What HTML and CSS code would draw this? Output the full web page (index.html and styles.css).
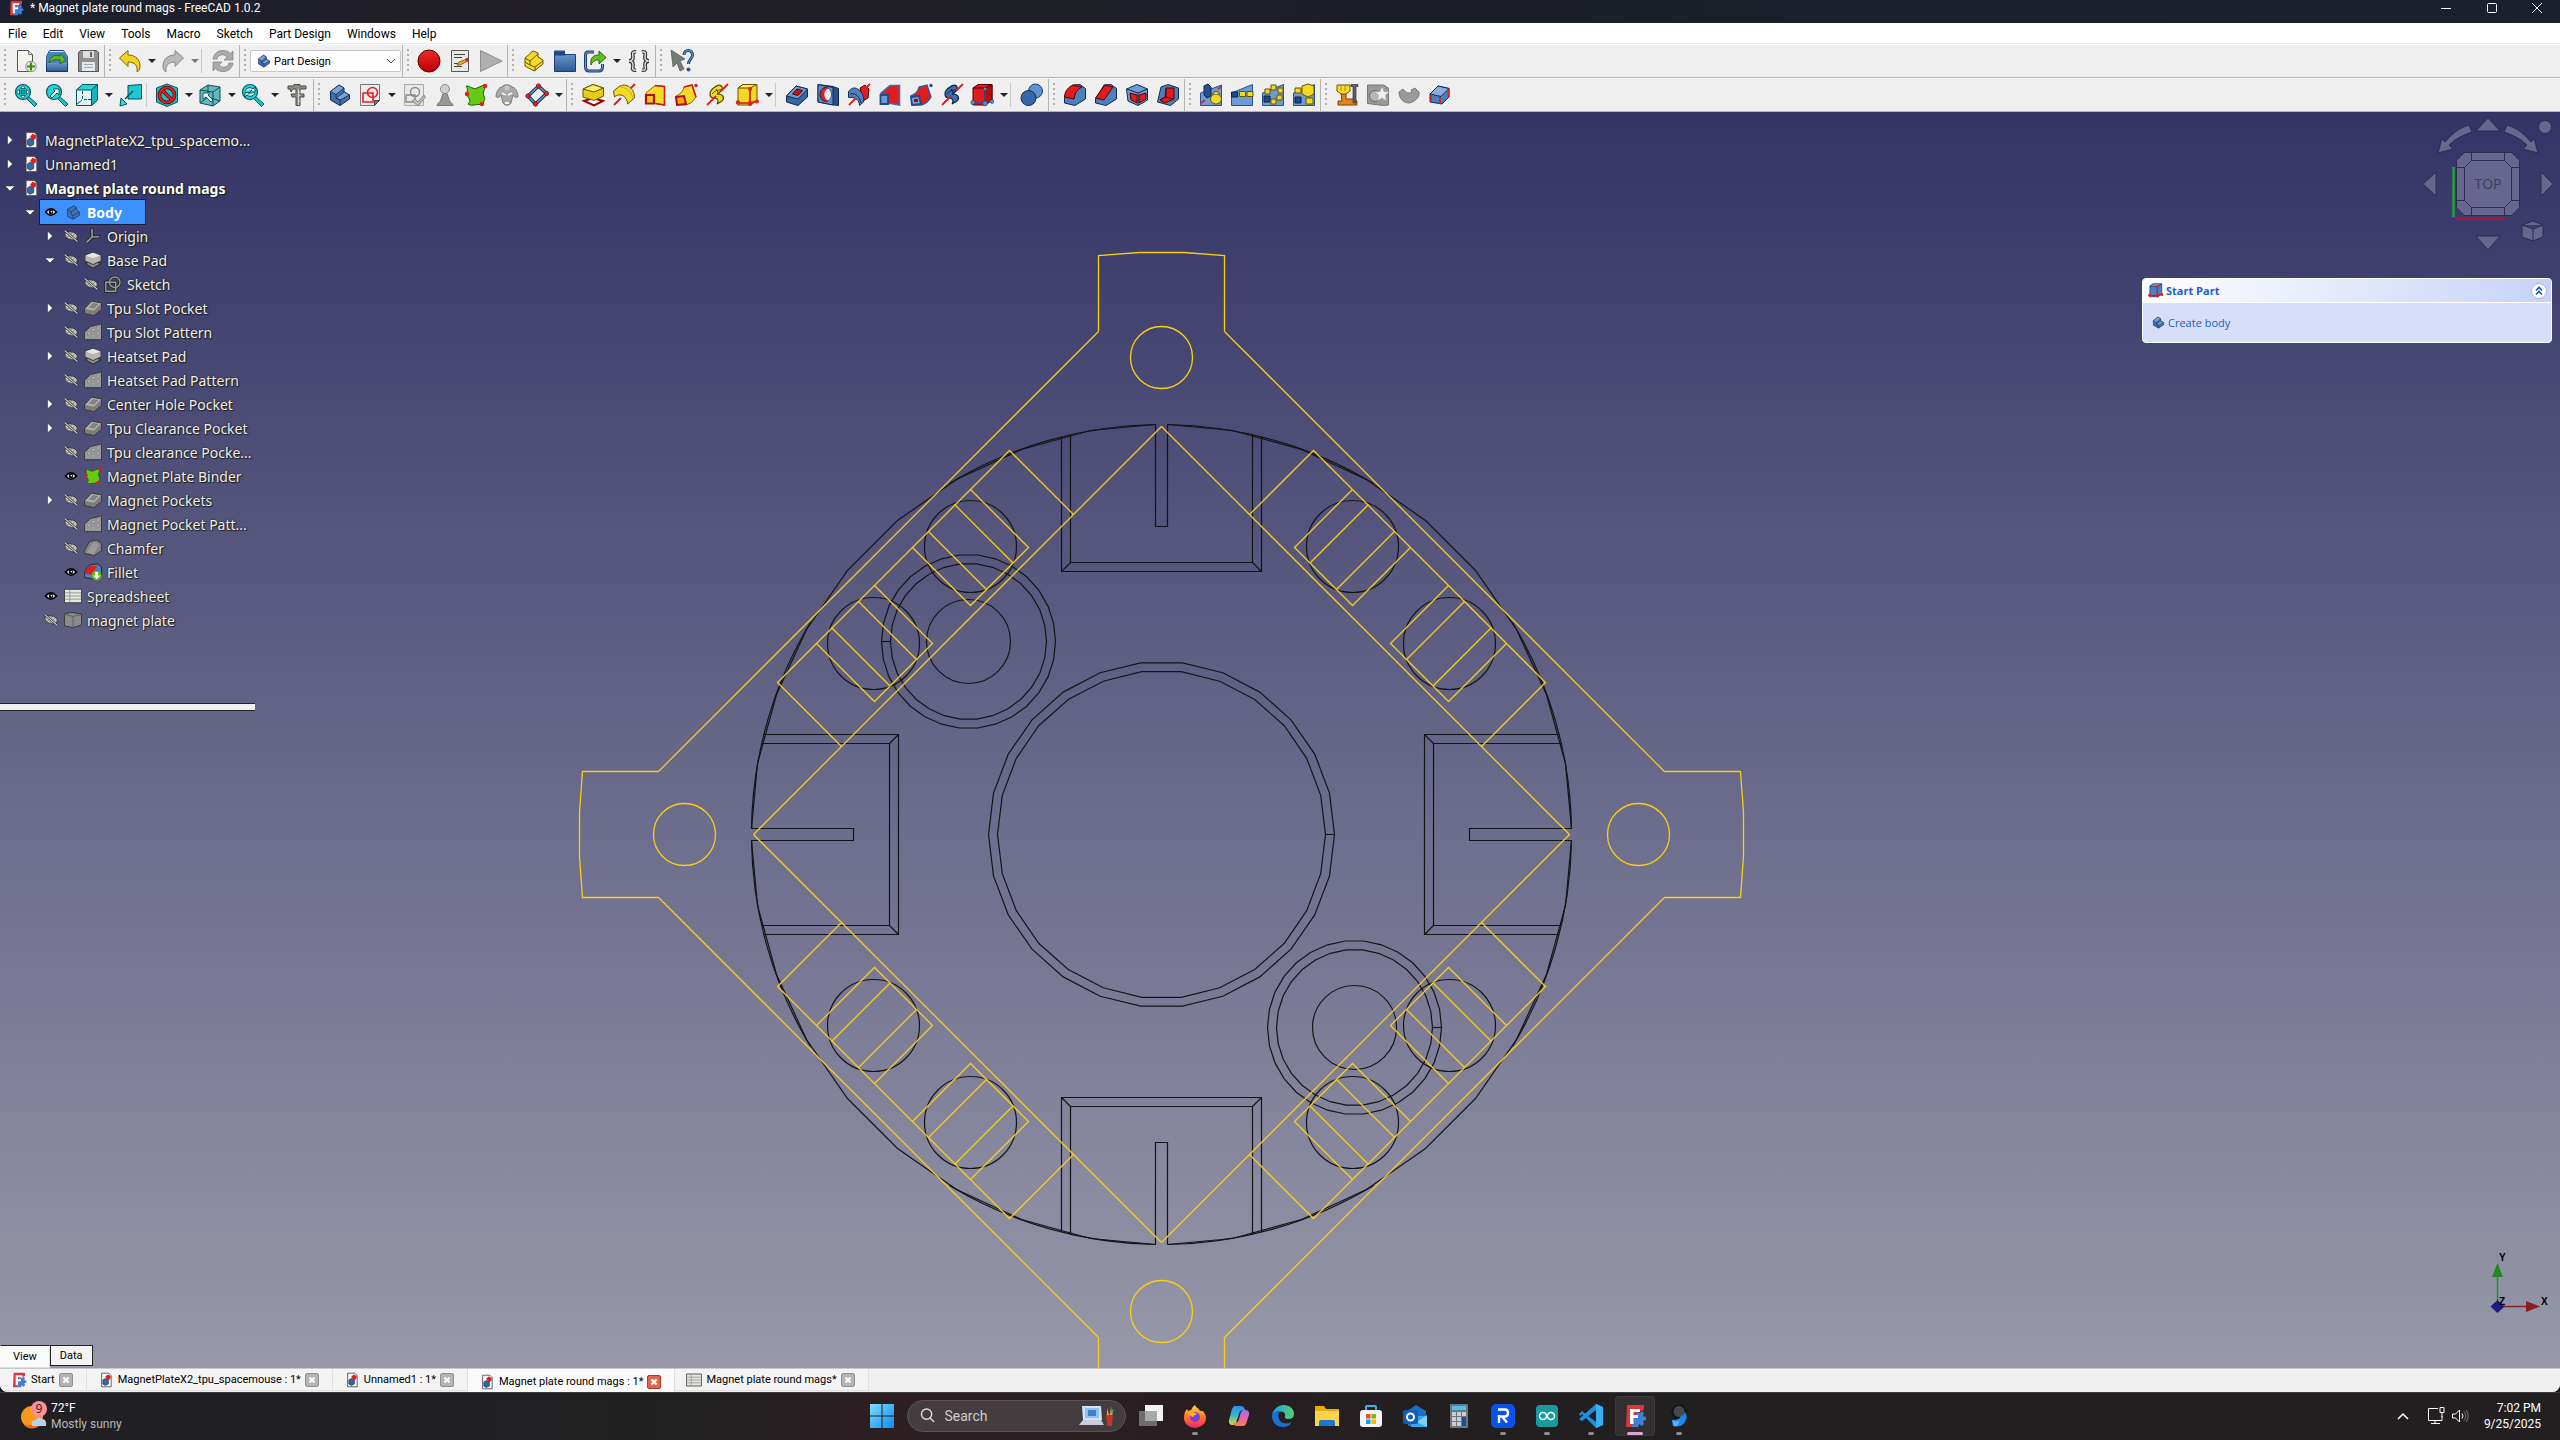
FILE: index.html
```html
<!DOCTYPE html>
<html lang="en">
<head>
<meta charset="utf-8">
<title>Magnet plate round mags - FreeCAD 1.0.2</title>
<link rel="stylesheet" href="styles.css">
</head>
<body>
<svg class="defs" aria-hidden="true">
  <defs>
    <linearGradient id="gb" x1="0" y1="0" x2="0" y2="1"><stop offset="0" stop-color="#729fcf"/><stop offset="1" stop-color="#2c5a99"/></linearGradient>
    <linearGradient id="gr" x1="0" y1="0" x2="0" y2="1"><stop offset="0" stop-color="#ef2929"/><stop offset="1" stop-color="#b80000"/></linearGradient>
    <linearGradient id="ff" x1="0" y1="0" x2="0" y2="1"><stop offset="0" stop-color="#ffd83a"/><stop offset=".5" stop-color="#ff7a1e"/><stop offset="1" stop-color="#f0256a"/></linearGradient>
    <linearGradient id="cp" x1="0" y1="0" x2="0" y2="1"><stop offset="0" stop-color="#2a8cf0"/><stop offset=".5" stop-color="#35b8c8"/><stop offset="1" stop-color="#f2d43a"/></linearGradient>
    <linearGradient id="cq" x1="0" y1="0" x2="0" y2="1"><stop offset="0" stop-color="#a06cf0"/><stop offset=".5" stop-color="#e860b0"/><stop offset="1" stop-color="#f7873a"/></linearGradient>
    <linearGradient id="eg" x1="0" y1="0" x2="1" y2="0"><stop offset="0" stop-color="#1a9fe6"/><stop offset="1" stop-color="#53d16e"/></linearGradient>
    <linearGradient id="wn" x1="0" y1="0" x2="1" y2="1"><stop offset="0" stop-color="#7fdcff"/><stop offset="1" stop-color="#0a8df2"/></linearGradient>
  </defs>
  <symbol id="fc" viewBox="0 0 24 24"><path d="M4 1h17v5l-8 3-3 14H3z" fill="#e0343c"/><path d="M14 8l3 1 2-2 2 2-1 3 3 1v3l-3 1 1 3-2 2-3-2-1 3H9l1-6z" fill="#3d7fd6"/><path d="M7 5h10v3h-6.500v3H15v3h-4.500v6H7z" fill="#fff"/></symbol>
  <symbol id="new" viewBox="0 0 24 24"><path d="M3.500 1.500h11l4 4v17h-15z" fill="#f2f2f0" stroke="#555"/><path d="M14.500 1.500v4h4" fill="#ccc" stroke="#777"/><circle cx="17" cy="17.500" r="5.200" fill="#e8f0e0" stroke="#888"/><path d="M17 13.500v8M13 17.500h8" stroke="#3a8a10" stroke-width="2.200"/></symbol>
  <symbol id="open" viewBox="0 0 24 24"><path d="M1.500 22.500v-15l3-6h14l4 6v15z" fill="#eee" stroke="#163a70"/><path d="M1.500 13h21v9.500h-21z" fill="url(#gb)" stroke="#163a70"/><path d="M1.500 7v7h21V7l-3-4h-15z" fill="#4a7fc0"/><path d="M4 14c1-7 6-9 11-7l1-2 5 6-6 4V11c-5-1-8 0-11 3z" fill="#5cb81c" stroke="#265c05" stroke-width=".8"/></symbol>
  <symbol id="save" viewBox="0 0 24 24"><path d="M2.500 3.500l2-2h16l2 2v19h-20z" fill="#8f8f8f" stroke="#555"/><path d="M7 2h11v7H7z" fill="#ddd"/><path d="M14 3h2v5h-2z" fill="#666"/><path d="M6 13h13v9H6z" fill="#e6e8ec"/><path d="M8 15.500h9M8 18.500h9" stroke="#9ab"/></symbol>
  <symbol id="undo" viewBox="0 0 24 24"><path d="M1.500 9L10 1.500V6c8 0 12 5 12 11 0 3-1 5-3 6 1-6-2-10-9-10v4.500z" fill="#f3d321" stroke="#77640a"/></symbol>
  <symbol id="redo" viewBox="0 0 24 24"><path d="M22.500 9L14 1.500V6C6 6 2 11 2 17c0 3 1 5 3 6-1-6 2-10 9-10v4.500z" fill="#b9b9b9" stroke="#8a8a8a"/></symbol>
  <symbol id="refresh" viewBox="0 0 24 24"><path d="M2 10C3 4 7 1.500 12 1.500c3 0 6 1 7.500 3L22 2v9h-9l3-3c-4-4-9-2-10 2zM22 14c-1 6-5 8.500-10 8.500-3 0-6-1-7.500-3L2 22v-9h9l-3 3c4 4 9 2 10-2z" fill="#aaa" stroke="#888" stroke-width=".8"/></symbol>
  <symbol id="rec" viewBox="0 0 24 24"><circle cx="12" cy="12" r="11" fill="url(#gr)" stroke="#5c0000" stroke-width="1"/></symbol>
  <symbol id="macro" viewBox="0 0 24 24"><path d="M3.500 1.500h17v21h-17z" fill="#e9e9e4" stroke="#555"/><path d="M6 5.500h11M6 8.500h8M6 14.500h4M6 17.500h8" stroke="#444"/><path d="M9 16l2-3 8-3 1 2-8 4z" fill="#e6b422" stroke="#5c3a00" stroke-width=".7"/><path d="M17 10l3-1.500 1 3-3 1z" fill="#c22"/></symbol>
  <symbol id="play" viewBox="0 0 24 24"><path d="M1.500 1.500v21L23 12z" fill="#b0b0b0" stroke="#8f8f8f"/></symbol>
  <symbol id="part" viewBox="0 0 24 24"><path d="M3 9l8-7 5 2v4l5 3v4l-9 7-9-5z" fill="#f5dc2a" stroke="#6b5900"/><path d="M3 9l5 3 8-7M8 12v4l5 2 8-6M13 18v4M3 13l5 3" fill="none" stroke="#6b5900"/></symbol>
  <symbol id="folder" viewBox="0 0 24 24"><path d="M1.500 2h10v3.500h11v17h-21z" fill="url(#gb)" stroke="#1b3f74"/><path d="M2 2.500h9l1 4H2z" fill="#1c4687"/></symbol>
  <symbol id="export" viewBox="0 0 24 24"><path d="M11 3H5Q2.500 3 2.500 6v12q0 4 4 4h9q4 0 4-4v-3" fill="none" stroke="#1d3f75" stroke-width="3"/><path d="M11 3H5Q2.500 3 2.500 6v12q0 4 4 4h9q4 0 4-4v-3" fill="none" stroke="#6d9ad0"/><path d="M8 16c-1-7 2-10 8-10V2l7 6.500-7 6.500v-4c-4 0-6 1-8 5z" fill="#5fc31b" stroke="#28600a"/></symbol>
  <symbol id="braces" viewBox="0 0 24 24"><path d="M9 3C4 2 6 6 6 8s-1 4-4 4c3 0 4 2 4 4s-2 6 3 5M15 3c5-1 3 3 3 5s1 4 4 4c-3 0-4 2-4 4s2 6-3 5" fill="none" stroke="#3c3c3c" stroke-width="3.800"/><path d="M9 3C4 2 6 6 6 8s-1 4-4 4c3 0 4 2 4 4s-2 6 3 5M15 3c5-1 3 3 3 5s1 4 4 4c-3 0-4 2-4 4s2 6-3 5" fill="none" stroke="#f4f4f4" stroke-width="1.200"/></symbol>
  <symbol id="whats" viewBox="0 0 24 24"><path d="M1 1l14 9-5 2 4 8-4 2-3-8-4 4z" fill="#757a76" stroke="#50544f" stroke-width=".7"/><path d="M14 6c0-6 8.500-6 8.500 0 0 4-4 4-4 9" fill="none" stroke="#183a68" stroke-width="3"/><path d="M14 6c0-6 8.500-6 8.500 0 0 4-4 4-4 9" fill="none" stroke="#5d8cc4" stroke-width="1.300"/><circle cx="18.500" cy="20.500" r="2" fill="#2d578f"/></symbol>
  <symbol id="mag" viewBox="0 0 24 24"><path d="M14 13l9 8-2.500 2.500L12 15z" fill="#13c5cf" stroke="#064b50" stroke-width=".9"/><circle cx="9" cy="9" r="7.500" fill="#1fd3dc" stroke="#075a60" stroke-width="1.200"/></symbol>
  <symbol id="fit" viewBox="0 0 24 24"><use href="#mag"/><path d="M9 2.500l2.500 3h-5zM9 15.500l2.500-3h-5zM2.500 9l3-2.500v5zM15.500 9l-3-2.500v5z" fill="#e8ffff" stroke="#034" stroke-width=".7"/><path d="M7 7h4v4H7z" fill="#0aa" stroke="#034" stroke-width=".5"/></symbol>
  <symbol id="fitsel" viewBox="0 0 24 24"><use href="#mag"/><path d="M5 13l5-5-2-2h6v6l-2-2-5 5z" fill="#e8f6f6" stroke="#034" stroke-width=".8"/></symbol>
  <symbol id="sync" viewBox="0 0 24 24"><use href="#mag"/><path d="M4 8c2-4 6-4 8-2l2-2v5H9l2-2M14 10c-2 4-6 4-8 2l-2 2V9.500h5l-2 2" fill="#c8f4f4" stroke="#044" stroke-width=".9"/></symbol>
  <symbol id="cube" viewBox="0 0 24 24"><path d="M1.500 7l6-5.500h15V17l-6 5.500h-15z" fill="#dff5f5" stroke="#0b5358"/><path d="M1.500 7l6-5.500h15L16.500 7z" fill="#1ed6e0" stroke="#0b5358"/><path d="M16.500 7l6-5.500V17l-6 5.500z" fill="#13b6c2" stroke="#0b5358"/><path d="M7.500 8v3M7.500 13v3M2 21l5-4M9 16.500h3M13 16.500h3" stroke="#0b5358"/></symbol>
  <symbol id="texview" viewBox="0 0 24 24"><path d="M9 2.500l13.500-1V16L9 16z" fill="#1cc8d2" stroke="#0b5358"/><path d="M14 8L6 16" stroke="#0b5358" stroke-width="1.500"/><path d="M1 23l1-8 6 6z" fill="#2cd8e0" stroke="#0b5358"/></symbol>
  <symbol id="noent" viewBox="0 0 24 24"><path d="M12 1l10.500 4v14L12 23.500 1.500 19V5z" fill="#18c0ca" stroke="#0b5358"/><circle cx="12" cy="12" r="7.500" fill="none" stroke="#500" stroke-width="3.600"/><path d="M7 7l10 10" stroke="#500" stroke-width="3.600"/><circle cx="12" cy="12" r="7.500" fill="none" stroke="#e02020" stroke-width="2.200"/><path d="M7 7l10 10" stroke="#e02020" stroke-width="2.200"/></symbol>
  <symbol id="cube2" viewBox="0 0 24 24"><path d="M2 7l8-5 12 2v14l-7 5-13-3z" fill="#63b8bf" stroke="#0b5358"/><path d="M2 7l13 2 7-5M15 9v14M10 2v12l12 4M10 14l-8 6" fill="none" stroke="#0b5358"/><path d="M5 10h7l-2 2 5 5-2 2-5-5-3 2z" fill="#e2f3f3" stroke="#134" stroke-width=".8"/></symbol>
  <symbol id="caliper" viewBox="0 0 24 24"><path d="M3 3h6V1.500h6V3h6v3h-6v5h4v3h-4v8.500h-4V14H7l-1-3h5V6H8L6 9 5 6H3z" fill="#8d8d85" stroke="#4a4a45"/><path d="M13.500 6v16M13.500 9h2M13.500 12h2M13.500 18h2" stroke="#eee" stroke-width=".8"/></symbol>
  <symbol id="body" viewBox="0 0 24 24"><path d="M2.500 8.500L11 2l5 3v4l5.500 3v4L12 22.500 2.500 17z" fill="#3f6fae" stroke="#122a4e"/><path d="M2.500 8.500L11 2l5 3-8 6.500zM12 17l9.500-5-5-3L8 15z" fill="#7aa5d8" stroke="#122a4e" stroke-width=".8"/><path d="M8 11.500V15l4 2v5.500" fill="none" stroke="#122a4e" stroke-width=".8"/></symbol>
  <symbol id="sketch" viewBox="0 0 24 24"><path d="M2.500 1.500h19v16l-5 5h-14z" fill="#eceeec" stroke="#777"/><path d="M21.500 17.500h-5v5z" fill="#777" stroke="#444"/><path d="M5 10h10v9H5z" fill="none" stroke="#e02020" stroke-width="1.600"/><circle cx="14.500" cy="9.500" r="5" fill="none" stroke="#e02020" stroke-width="1.600"/></symbol>
  <symbol id="sketchok" viewBox="0 0 24 24"><path d="M2.500 1.500h19v21h-19z" fill="#e8e8e8" stroke="#aaa"/><path d="M4 12h9v7H4z" fill="none" stroke="#8a8a8a" stroke-width="1.400"/><circle cx="13" cy="9" r="4.500" fill="none" stroke="#8a8a8a" stroke-width="1.400"/><path d="M10 18l3-2 3 3 6-7 1.500 2L16 23z" fill="#bbb" stroke="#8a8a8a"/></symbol>
  <symbol id="pawn" viewBox="0 0 24 24"><path d="M4 22.500c0-2 3-3 4-6l2-6h4l2 6c1 3 4 4 4 6z" fill="#989898" stroke="#777"/><circle cx="12" cy="6" r="4.500" fill="#d0d0d0" stroke="#888"/></symbol>
  <symbol id="binder" viewBox="0 0 24 24"><path d="M2 3c5 0 7 4 11 2 3-1 5-3 9-3-1 5-4 7-2 11 1 2 1 3 0 5l-2 4C13 20 8 24 4 21c4-4 0-6-1-9s2-5-1-9z" fill="#63cc12" stroke="#235c00"/><circle cx="21" cy="3" r="2.200" fill="#e02020"/><circle cx="3" cy="11" r="2.200" fill="#e02020"/><circle cx="18" cy="21" r="2.200" fill="#e02020"/></symbol>
  <symbol id="sheep" viewBox="0 0 24 24"><path d="M7 4c2-3 8-3 10 0 3 0 6 5 6 10-2 1-4 0-5-2l-2 8c-2 3-6 3-8 0l-2-8c-1 2-3 3-5 2C1 9 4 4 7 4z" fill="#a9a9a9" stroke="#7c7c7c"/><path d="M7 10l4 2M17 10l-4 2M10 20h4" stroke="#f4f4f4" stroke-width="1.800"/><circle cx="12" cy="5" r="2.500" fill="#c8c8c8"/></symbol>
  <symbol id="diamond" viewBox="0 0 24 24"><path d="M13.500 3L21.500 10.500 10.500 21 3 13z" fill="none" stroke="#142e55" stroke-width="3.400"/><path d="M13.500 3L21.500 10.500 10.500 21 3 13z" fill="none" stroke="#6d9ad0" stroke-width="1.400"/><g fill="#e02020" stroke="#700" stroke-width=".6"><circle cx="13.500" cy="3" r="2.200"/><circle cx="21.500" cy="10.500" r="2.200"/><circle cx="10.500" cy="21" r="2.200"/><circle cx="3" cy="13" r="2.200"/></g></symbol>
  <symbol id="pad" viewBox="0 0 24 24"><path d="M3 18l9-3 10 3-9 4.500z" fill="#fff" stroke="#a00000" stroke-width="2"/><path d="M2 6l10-4.500L22.500 5v8L13 17.500 2 14z" fill="#e8cc18" stroke="#665500"/><path d="M2 6l10-4.500L22.500 5 13 9z" fill="#fbee5a" stroke="#665500"/></symbol>
  <symbol id="revol" viewBox="0 0 24 24"><path d="M1.500 8l5-4c4-3 8-2 11 0 4 3 5 7 5 11l-7 6c0-3-1-6-4-8s-7-1-9 1z" fill="#f2dc28" stroke="#665500"/><path d="M8 4c7 0 13 7 13 12" fill="none" stroke="#c8b010"/><path d="M2 22l7-7M19 5l4-4" stroke="#e02020" stroke-width="2"/></symbol>
  <symbol id="loft" viewBox="0 0 24 24"><path d="M3 10L12 2.500l9.500 1V22l-9-1.500H3z" fill="#f2dc28" stroke="#8a6a00"/><path d="M12 2.500l9.500 1V22l-9-1.500" fill="none" stroke="#d01818" stroke-width="1.600"/><path d="M3 12h8v8.500H3z" fill="#f5c820" stroke="#b01010" stroke-width="2.200"/></symbol>
  <symbol id="pipe" viewBox="0 0 24 24"><path d="M2 13Q9 10 10 4l8-2 4 12q-4 7-10 8H4z" fill="#f2dc28" stroke="#8a6a00"/><path d="M10 4l8-2 4 12" fill="none" stroke="#d01818" stroke-width="1.600"/><path d="M2 14l8-1 2 8-9 1z" fill="#f5a820" stroke="#b01010" stroke-width="2"/><circle cx="22" cy="2.500" r="1.700" fill="#d01818"/></symbol>
  <symbol id="helix" viewBox="0 0 24 24"><path d="M10 4c5-4 8-1 7 3l-4 4c5 0 7 4 4 7l-5 3c2-3 1-6-3-6-5 0-6-7 1-11z" fill="#f0d824" stroke="#554800" stroke-width="1.200"/><path d="M7 11c3-4 7-4 10-4M11 6c2 2 2 4 2 6" fill="none" stroke="#554800"/><path d="M2 22l9-9M16 8l7-7" stroke="#e02020" stroke-width="1.800"/></symbol>
  <symbol id="addcube" viewBox="0 0 24 24"><path d="M3 5l5-3.500h14V17l-6 5H3z" fill="#f0d824" stroke="#665500"/><path d="M3 5l5-3.500h14L15 5z" fill="#fbee5a" stroke="#665500"/><path d="M15 5v15M3 20h12l7-2M15 5v13" stroke="#d01818" stroke-width="1.600" fill="none"/><g fill="#e02020"><circle cx="15" cy="6" r="2"/><circle cx="3" cy="19.500" r="2.200"/><circle cx="15" cy="20.500" r="2.400"/><circle cx="22" cy="18.500" r="2"/></g></symbol>
  <symbol id="startpart" viewBox="0 0 24 24"><path d="M3 5l5-3.500h14V17l-6 5H3z" fill="#4a7fc0" stroke="#122a4e"/><path d="M3 5l5-3.500h14L15 5z" fill="#86aede" stroke="#122a4e"/><path d="M15 5v15M3 20h12l7-2" stroke="#d01818" stroke-width="2" fill="none"/><g fill="#e02020"><circle cx="15" cy="6" r="2.200"/><circle cx="3" cy="19.500" r="2.600"/><circle cx="15" cy="20.500" r="2.800"/><circle cx="22" cy="18.500" r="2.400"/></g></symbol>
  <symbol id="pocket" viewBox="0 0 24 24"><path d="M1.500 13L11 3l11.500 3v8L13 22.500 1.500 19z" fill="#3466a8" stroke="#122a4e"/><path d="M1.500 13L11 3l11.500 3L13 16z" fill="#6d9bd2" stroke="#122a4e"/><path d="M7.500 11l4.500-5 5.500 1.500-4.500 5z" fill="#d01010" stroke="#500"/></symbol>
  <symbol id="hole" viewBox="0 0 24 24"><path d="M2 1.500l15 2 5.500 2v17L18 22 2 19z" fill="#27508c" stroke="#122a4e"/><path d="M2 1.500l15 3V22L2 19z" fill="#5b8cc8" stroke="#122a4e"/><ellipse cx="9.500" cy="11.500" rx="5.500" ry="7" fill="#e01c1c" stroke="#122a4e"/><path d="M12 5.500c-5 2-5 10 0 12 4-2 4-10 0-12z" fill="#efefef"/></symbol>
  <symbol id="groove" viewBox="0 0 24 24"><path d="M13 5l5-3 4 4-1 9-5 3z" fill="#e02020" stroke="#500"/><path d="M1.500 9c2-4 6-5 9-3 5 3 7 8 6 13l-4 3.500c0-5-4-9-11-8z" fill="#4e82c2" stroke="#122a4e"/><path d="M3 11c6-2 10 4 11 9" fill="none" stroke="#122a4e"/><path d="M2 22l7-7M19 5l4-4" stroke="#e02020" stroke-width="1.800"/></symbol>
  <symbol id="subloft" viewBox="0 0 24 24"><path d="M3 10L12 2.500h9.500V22l-9-1.500H3z" fill="#e01c1c" stroke="#3b6fb4" stroke-width="1.600"/><path d="M2.500 12H10v9H2.500z" fill="#6d9bd2" stroke="#1f4a88" stroke-width="1.800"/></symbol>
  <symbol id="subpipe" viewBox="0 0 24 24"><path d="M2 13Q9 10 10 4l8-2 4 12q-4 7-10 8H4z" fill="#e01c1c" stroke="#2d5d9f" stroke-width="1.400"/><path d="M2 14l8-1 2 8-9 1z" fill="#7aa5d8" stroke="#1f4a88" stroke-width="1.800"/><path d="M5 16h4v3H5z" fill="#a00"/><circle cx="22" cy="2.500" r="1.700" fill="#27508c"/></symbol>
  <symbol id="subhelix" viewBox="0 0 24 24"><path d="M10 4c5-4 8-1 7 3l-4 4c5 0 7 4 4 7l-5 3c2-3 1-6-3-6-5 0-6-7 1-11z" fill="#3d6fb0" stroke="#0d2344" stroke-width="1.200"/><path d="M7 11c3-4 7-4 10-4M11 6c2 2 2 4 2 6" fill="none" stroke="#0d2344"/><path d="M2 22l9-9M16 8l7-7" stroke="#e02020" stroke-width="1.800"/></symbol>
  <symbol id="subcube" viewBox="0 0 24 24"><path d="M3 5l5-3.500h14V17l-6 5H3z" fill="#e01c1c" stroke="#500"/><path d="M15 5l7-3.500V17l-7 4z" fill="#b80c0c" stroke="#500"/><path d="M3 5h12" stroke="#500"/><path d="M15 5v15M3 20h12l7-2" stroke="#27508c" stroke-width="1.600" fill="none"/><g fill="#5b8cc8" stroke="#122a4e" stroke-width=".5"><circle cx="15" cy="6" r="1.800"/><circle cx="3" cy="19.500" r="2.200"/><circle cx="15" cy="20.500" r="2.400"/><circle cx="22" cy="18.500" r="2"/></g></symbol>
  <symbol id="bool" viewBox="0 0 24 24"><circle cx="15.500" cy="8" r="7" fill="#5f93cf" stroke="#1c3f74"/><circle cx="8.500" cy="15" r="7.500" fill="#3568ab" stroke="#122a4e"/></symbol>
  <symbol id="fillet" viewBox="0 0 24 24"><path d="M1.500 16C2 8 6 5 10 2l7-.5 5.500 4V16L12 22.500 1.500 20z" fill="#4a7fc0" stroke="#122a4e"/><path d="M1.500 14C2 7 6 4 10 2l9 2q-7 3-8 12z" fill="#e01c1c" stroke="#500"/></symbol>
  <symbol id="chamfer" viewBox="0 0 24 24"><path d="M1.500 16L10 2l7-.5 5.500 4V16L12 22.500 1.500 20z" fill="#4a7fc0" stroke="#122a4e"/><path d="M1.500 15L11 2l8 2-9 13z" fill="#e01c1c" stroke="#500"/></symbol>
  <symbol id="draft" viewBox="0 0 24 24"><path d="M1.500 6L12 1.500 22.500 6v11L13 22.500 3 18z" fill="#6d9bd2" stroke="#122a4e"/><path d="M5 10l7 2v8l-6-3zM14 12l7-2v6l-7 4z" fill="#e01c1c" stroke="#500"/><path d="M1.500 6L13 10l9.500-4M13 10v12" fill="none" stroke="#122a4e"/></symbol>
  <symbol id="thick" viewBox="0 0 24 24"><path d="M5 4l7-2.500L22.500 5v11l-8 6.500L1.500 19z" fill="#4a7fc0" stroke="#122a4e"/><path d="M10 5h8v11l-9 4-5-3 5-3z" fill="#e01c1c" stroke="#500"/><path d="M10 5v9l8 2M10 14l-6 3" fill="none" stroke="#600"/></symbol>
  <symbol id="mirror" viewBox="0 0 24 24"><path d="M1.500 10L22.500 2v20.500h-21z" fill="#6d9bd2" stroke="#27508c"/><path d="M5 3l4-2 3 3v9l-4 2-3-3z" fill="#27508c" stroke="#0d2344"/><ellipse cx="17" cy="16" rx="5.500" ry="5" fill="#f0d824" stroke="#665500"/><path d="M13 11l4-3 4 3" fill="#f0d824" stroke="#665500"/><path d="M2 20l4-3M19 6l3-2" stroke="#e02020" stroke-width="1.800"/></symbol>
  <symbol id="linpat" viewBox="0 0 24 24"><path d="M1.500 10L22.500 1.500v21h-21z" fill="#6d9bd2" stroke="#27508c"/><path d="M1.500 9h6v5h-6z" fill="#1f4a88" stroke="#0d2344"/><path d="M9.500 8.500h6v5h-6zM17 8.500h6v5h-6z" fill="#f0d824" stroke="#665500"/></symbol>
  <symbol id="polpat" viewBox="0 0 24 24"><path d="M1.500 10L22.500 1.500v21h-21z" fill="#6d9bd2" stroke="#27508c"/><path d="M3 13h6v6H3z" fill="#1f4a88" stroke="#0d2344"/><path d="M4 6h5v5H4zM10 2h5v5h-5zM17 5h5v5h-5zM16 12h5v5h-5zM10 16h5v5h-5z" fill="#f0d824" stroke="#665500"/></symbol>
  <symbol id="multi" viewBox="0 0 24 24"><path d="M1.500 10L22.500 1.500v21h-21z" fill="#6d9bd2" stroke="#27508c"/><path d="M3 14h6v6H3z" fill="#1f4a88" stroke="#0d2344"/><path d="M10 3l6-2 6 2v8l-6 3-6-3zM3 5h6v5H3zM14 15h7v6h-7z" fill="#f0d824" stroke="#665500"/></symbol>
  <symbol id="check" viewBox="0 0 24 24"><path d="M6 9h5v7h7q4 0 4 3v3H3v-4h4z" fill="#e8831c" stroke="#7a4200"/><path d="M2 2h13v6l-4 3H6L2 8z" fill="#f5dc2a" stroke="#665500"/><path d="M6 3v5M10 3v5" stroke="#a89000"/><path d="M16 1.500h7v2h-2V20h-3V3.500h-2z" fill="#5d6166" stroke="#333" stroke-width=".7"/></symbol>
  <symbol id="shbgear" viewBox="0 0 24 24"><path d="M1.500 2h16l5 3v17l-5 .5-16-2z" fill="#9a9a9a" stroke="#777"/><circle cx="9" cy="13" r="5.500" fill="#b8b8b8" stroke="#666"/><path d="M16 3l2 5.500 5.500.5-4 3 1 6-4.500-3-4.500 3 1-6-4-3 5.500-.5z" fill="#f0f0f0" stroke="#999" stroke-width=".6"/></symbol>
  <symbol id="crescent" viewBox="0 0 24 24"><path d="M2 9l4-3c3 4 6 5 9 3l-1-2 4-2 4 4c1 5-4 10-10 11-5 0-10-4-10-11z" fill="#9a9a9a" stroke="#7a7a7a"/></symbol>
  <symbol id="wedge" viewBox="0 0 24 24"><path d="M2 11l8-8 11 2.500V14l-7 7L2 19z" fill="#4a7fc0" stroke="#122a4e"/><path d="M2 11l8-8 11 2.500-8 8z" fill="#86aede" stroke="#122a4e"/><path d="M3 12v7M12 14v7M20.500 7v7" stroke="#e02020" stroke-width="1.800"/></symbol>
  <symbol id="doc" viewBox="0 0 20 20"><path d="M4.500 1.500h9l3 3v14h-12z" fill="#f6f6f4" stroke="#444"/><path d="M6 10l3-2 4 1v6l-4 2-3-2z" fill="#3465a4" stroke="#12294d" stroke-width=".7"/><path d="M9 6l3-3 4 2-1 4-3 1z" fill="#e01c1c"/></symbol>
  <symbol id="eye" viewBox="0 0 20 20"><path d="M4 10q6-7 12 0-6 7-12 0z" fill="#fff" stroke="#000" stroke-width="2"/><circle cx="10" cy="10" r="2.600" fill="#000"/><circle cx="10.500" cy="9.500" r="1" fill="#fff"/></symbol>
  <symbol id="hid" viewBox="0 0 20 20"><path d="M3 7q5-3 10-1 4 2 4 4l-1 4q-5 1-9-1-4-2-4-6z" fill="#c4c4c0" stroke="#222" stroke-width=".8"/><path d="M3 4l14 12" stroke="#222" stroke-width="2.600"/><path d="M3 4l14 12" stroke="#e4e4e0" stroke-width="1.200"/><path d="M6 11l5-4M9 13l5-5" stroke="#666" stroke-width=".8"/></symbol>
  <symbol id="tbody" viewBox="0 0 20 20"><path d="M4 7l7-4 3 2v3l3 2v4l-7 4-6-3z" fill="#3f74b4" stroke="#1d4275"/><path d="M4 7l4 3 6-5M8 10v3l2 1 7-4M10 14v4" fill="none" stroke="#1d4275"/></symbol>
  <symbol id="origin" viewBox="0 0 20 20"><path d="M9 1v10h9M9 11l-6 6" fill="none" stroke="#222" stroke-width="3.600"/><path d="M9 2v9h8M9 11l-6 6" fill="none" stroke="#a8a8a8" stroke-width="1.600"/></symbol>
  <symbol id="tpad" viewBox="0 0 20 20"><path d="M1 14l9-3 9 3-9 5z" fill="#888" stroke="#222"/><path d="M1 5l9-3.500L19 5v6l-9 4-9-4z" fill="#b4b4b0" stroke="#333"/><path d="M1.500 5L10 2l8.500 3L10 8z" fill="#e6e6e2"/></symbol>
  <symbol id="tsk" viewBox="0 0 20 20"><path d="M2 8h11v10H2z" fill="none" stroke="#222" stroke-width="3.400"/><circle cx="12" cy="8" r="5.800" fill="none" stroke="#222" stroke-width="3.400"/><path d="M2 8h11v10H2z" fill="none" stroke="#9c9c9c" stroke-width="1.600"/><circle cx="12" cy="8" r="5.800" fill="none" stroke="#9c9c9c" stroke-width="1.600"/></symbol>
  <symbol id="tpock" viewBox="0 0 20 20"><path d="M.5 11L8 2.500l11.500 2v7L11 18.500.5 16z" fill="#7d7d7d" stroke="#333"/><path d="M1 11l7.500-8L19 5l-8 8z" fill="#adadad"/><path d="M6.500 9L10 5l5 1-4 4z" fill="#858585" stroke="#666" stroke-width=".6"/></symbol>
  <symbol id="tpat" viewBox="0 0 20 20"><path d="M.5 18.500v-8L7 4l12.500-3v17.500z" fill="#989898" stroke="#333"/><path d="M4 10h3v3H4zM9 6h3v3H9zM14 4h3v3h-3zM14 10h3v3h-3zM9 13h3v3H9z" fill="#b8b8b8" stroke="#7a7a7a" stroke-width=".6"/></symbol>
  <symbol id="tcham" viewBox="0 0 20 20"><path d="M.5 13L6 3l8-2 5.500 4v8L11 18.500.5 16z" fill="#848484" stroke="#333"/><path d="M11 17l6-11-6-3-8 12z" fill="#9a9a9a"/></symbol>
  <symbol id="tfil" viewBox="0 0 20 20"><path d="M.5 13C1 7 4 4 7 2l8-1 4.500 3.500v9L11 18 .5 16z" fill="#4a7fc0" stroke="#222"/><path d="M1 12c1-6 4-8 7-9l7 1q-4 3-5 9z" fill="#e01c1c"/><circle cx="14" cy="14" r="5.500" fill="#5cbf16"/><path d="M12.500 10h3v4H18l-4 4-4-4h2.500z" fill="#fff"/></symbol>
  <symbol id="sheet" viewBox="0 0 20 20"><path d="M.5 2.500h19v15H.5z" fill="#e6e8e4" stroke="#333"/><path d="M1 6.500h18M1 10h18M1 13.500h18M6.500 3v14" stroke="#8f938c" stroke-width="1"/></symbol>
  <symbol id="tbox" viewBox="0 0 20 20"><path d="M.5 3.500L8 1.500l11.500 2v12L10 18.500.5 16.500z" fill="#8a8a8a" stroke="#333"/><path d="M1 4l9 2v12M10 6l9-2" fill="none" stroke="#5c5c5c"/></symbol>
  <symbol id="right" viewBox="0 0 10 10"><path d="M2.500 0l5 5-5 5z" fill="#fff" stroke="#333" stroke-width=".6"/></symbol>
  <symbol id="down" viewBox="0 0 10 10"><path d="M0 3l5 5 5-5z" fill="#fff" stroke="#333" stroke-width=".6"/></symbol>
  <symbol id="arr" viewBox="0 0 8 8"><path d="M0 2h8L4 6z" fill="currentColor"/></symbol>
  <symbol id="x" viewBox="0 0 14 14"><path d="M4 4l6 6M10 4l-6 6" stroke="#fff" stroke-width="2.400"/></symbol>
</svg>

<div class="window">
  <header class="titlebar">
    <svg class="app" aria-hidden="true"><use href="#fc"/></svg>
    <h1>* Magnet plate round mags - FreeCAD 1.0.2</h1>
    <div class="winbtns">
      <button aria-label="Minimize"><svg viewBox="0 0 10 10"><path d="M0 5.500h10"/></svg></button>
      <button aria-label="Maximize"><svg viewBox="0 0 10 10"><rect x=".5" y=".5" width="9" height="9" rx="1"/></svg></button>
      <button aria-label="Close"><svg viewBox="0 0 10 10"><path d="M0 0l10 10M10 0L0 10"/></svg></button>
    </div>
  </header>
  <nav class="menubar">
    <button>File</button><button>Edit</button><button>View</button><button>Tools</button><button>Macro</button><button>Sketch</button><button>Part Design</button><button>Windows</button><button>Help</button>
  </nav>

  <div class="toolrow">
    <div class="toolbar">
      <button aria-label="New"><svg><use href="#new"/></svg></button>
      <button aria-label="Open"><svg><use href="#open"/></svg></button>
      <button aria-label="Save"><svg><use href="#save"/></svg></button>
    </div>
    <div class="toolbar">
      <button class="drop" aria-label="Undo"><svg><use href="#undo"/></svg><svg class="arr"><use href="#arr"/></svg></button>
      <button class="drop dim" aria-label="Redo"><svg><use href="#redo"/></svg><svg class="arr"><use href="#arr"/></svg></button>
      <span class="sep"></span>
      <button aria-label="Refresh"><svg><use href="#refresh"/></svg></button>
    </div>
    <div class="toolbar">
      <label class="combo"><svg><use href="#body"/></svg><select aria-label="Workbench"><option>Part Design</option></select><svg class="chev" viewBox="0 0 10 10"><path d="M1 3l4 4 4-4"/></svg></label>
    </div>
    <div class="toolbar">
      <button aria-label="Record macro"><svg><use href="#rec"/></svg></button>
      <button aria-label="Macros"><svg><use href="#macro"/></svg></button>
      <button aria-label="Run macro"><svg><use href="#play"/></svg></button>
    </div>
    <div class="toolbar">
      <button aria-label="Create part"><svg><use href="#part"/></svg></button>
      <button aria-label="Create group"><svg><use href="#folder"/></svg></button>
      <button class="drop" aria-label="Make link"><svg><use href="#export"/></svg><svg class="arr"><use href="#arr"/></svg></button>
      <button aria-label="Variable set"><svg><use href="#braces"/></svg></button>
    </div>
    <div class="toolbar">
      <button aria-label="What's this"><svg><use href="#whats"/></svg></button>
    </div>
  </div>

  <div class="toolrow">
    <div class="toolbar">
      <button aria-label="Fit all"><svg><use href="#fit"/></svg></button>
      <button aria-label="Fit selection"><svg><use href="#fitsel"/></svg></button>
      <button class="drop" aria-label="Standard views"><svg><use href="#cube"/></svg><svg class="arr"><use href="#arr"/></svg></button>
      <button aria-label="Align to selection"><svg><use href="#texview"/></svg></button>
      <span class="sep"></span>
      <button class="drop" aria-label="Draw style"><svg><use href="#noent"/></svg><svg class="arr"><use href="#arr"/></svg></button>
      <button class="drop" aria-label="Selection view"><svg><use href="#cube2"/></svg><svg class="arr"><use href="#arr"/></svg></button>
      <button class="drop" aria-label="Sync view"><svg><use href="#sync"/></svg><svg class="arr"><use href="#arr"/></svg></button>
      <button aria-label="Measure"><svg><use href="#caliper"/></svg></button>
    </div>
    <div class="toolbar">
      <button aria-label="New body"><svg><use href="#body"/></svg></button>
      <button class="drop" aria-label="New sketch"><svg><use href="#sketch"/></svg><svg class="arr"><use href="#arr"/></svg></button>
      <button aria-label="Validate sketch"><svg><use href="#sketchok"/></svg></button>
      <button aria-label="Check geometry"><svg><use href="#pawn"/></svg></button>
      <button aria-label="Shape binder"><svg><use href="#binder"/></svg></button>
      <button aria-label="Clone"><svg><use href="#sheep"/></svg></button>
      <button class="drop" aria-label="Datum"><svg><use href="#diamond"/></svg><svg class="arr"><use href="#arr"/></svg></button>
    </div>
    <div class="toolbar">
      <button aria-label="Pad"><svg><use href="#pad"/></svg></button>
      <button aria-label="Revolution"><svg><use href="#revol"/></svg></button>
      <button aria-label="Additive loft"><svg><use href="#loft"/></svg></button>
      <button aria-label="Additive pipe"><svg><use href="#pipe"/></svg></button>
      <button aria-label="Additive helix"><svg><use href="#helix"/></svg></button>
      <button class="drop" aria-label="Additive primitive"><svg><use href="#addcube"/></svg><svg class="arr"><use href="#arr"/></svg></button>
      <span class="sep"></span>
      <button aria-label="Pocket"><svg><use href="#pocket"/></svg></button>
      <button aria-label="Hole"><svg><use href="#hole"/></svg></button>
      <button aria-label="Groove"><svg><use href="#groove"/></svg></button>
      <button aria-label="Subtractive loft"><svg><use href="#subloft"/></svg></button>
      <button aria-label="Subtractive pipe"><svg><use href="#subpipe"/></svg></button>
      <button aria-label="Subtractive helix"><svg><use href="#subhelix"/></svg></button>
      <button class="drop" aria-label="Subtractive primitive"><svg><use href="#subcube"/></svg><svg class="arr"><use href="#arr"/></svg></button>
      <span class="sep"></span>
      <button aria-label="Boolean"><svg><use href="#bool"/></svg></button>
    </div>
    <div class="toolbar">
      <button aria-label="Fillet"><svg><use href="#fillet"/></svg></button>
      <button aria-label="Chamfer"><svg><use href="#chamfer"/></svg></button>
      <button aria-label="Draft"><svg><use href="#draft"/></svg></button>
      <button aria-label="Thickness"><svg><use href="#thick"/></svg></button>
    </div>
    <div class="toolbar">
      <button aria-label="Mirrored"><svg><use href="#mirror"/></svg></button>
      <button aria-label="Linear pattern"><svg><use href="#linpat"/></svg></button>
      <button aria-label="Polar pattern"><svg><use href="#polpat"/></svg></button>
      <button aria-label="Multi-transform"><svg><use href="#multi"/></svg></button>
    </div>
    <div class="toolbar">
      <button aria-label="Shaft"><svg><use href="#check"/></svg></button>
      <button aria-label="Gear"><svg><use href="#shbgear"/></svg></button>
      <button aria-label="Sprocket"><svg><use href="#crescent"/></svg></button>
      <button aria-label="Suppress"><svg><use href="#wedge"/></svg></button>
    </div>
  </div>

  <main class="viewport">
    <svg class="scene" viewBox="0 112 2560 1256" preserveAspectRatio="xMidYMid slice" aria-hidden="true">
      <defs>
        <!-- one quarter of the plate, repeated at 90 degree steps -->
        <g id="qb">
          <path d="M-6-410L-71-404-140-385-205-355-264-314-314-264-355-205-385-140-404-71-410-6"/>
          <path d="M-6-410A410 410 0 0 0-212-351M-410-6A410 410 0 0 1-351-212"/>
          <path d="M-6-410V-308H6V-410M-100-398V-263H100V-398M-91-400V-272H91V-400M-100-263l9-9M100-263l-9-9"/>
          <circle cx="-191" cy="-288" r="46"/><circle cx="-288" cy="-191" r="46"/>
        </g>
        <g id="qy">
          <path d="M-408 0L0-408M-63-503L-503-63M-63-503V-579L-22-582H22L63-579V-503"/>
          <circle cx="0" cy="-477" r="31"/>
          <path d="M-88-320L-152-384-384-152-320-88"/>
          <path d="M-191-345L-133-287-191-229-249-287M-207-330L-149-272M-233-303L-175-245"/>
          <path d="M-287-249L-229-191-287-133-345-191M-303-233L-245-175M-330-207L-272-149"/>
        </g>
      </defs>
      <g class="edges" transform="translate(1161.500 834.500)">
        <use href="#qb"/><use href="#qb" transform="rotate(90)"/><use href="#qb" transform="rotate(180)"/><use href="#qb" transform="rotate(270)"/>
        <g id="bore" transform="translate(-193 -193)">
          <circle r="42"/>
          <path d="M-87 0h9"/>
          <path d="M87 0L85.100 18.100 79.500 35.400 70.400 51.100 58.200 64.700 43.500 75.300 26.900 82.700 9.100 86.500-9.100 86.500-26.900 82.700-43.500 75.300-58.200 64.700-70.400 51.100-79.500 35.400-85.100 18.100-87 0-85.100-18.100-79.500-35.400-70.400-51.100-58.200-64.700-43.500-75.300-26.900-82.700-9.100-86.500 9.100-86.500 26.900-82.700 43.500-75.300 58.200-64.700 70.400-51.100 79.500-35.400 85.100-18.100z"/>
          <path d="M78 0L76.300 16.200 71.300 31.700 63.100 45.800 52.200 58 39 67.500 24.100 74.200 8.200 77.600-8.200 77.600-24.100 74.200-39 67.500-52.200 58-63.100 45.800-71.300 31.700-76.300 16.200-78 0-76.300-16.200-71.300-31.700-63.100-45.800-52.200-58-39-67.500-24.100-74.200-8.200-77.600 8.200-77.600 24.100-74.200 39-67.500 52.200-58 63.100-45.800 71.300-31.700 76.300-16.200z"/>
        </g>
        <use href="#bore" transform="rotate(180)"/>
        <path d="M173 0L168 41.400 153.200 80.400 129.500 114.700 98.300 142.400 61.300 161.800 20.900 171.700-20.900 171.700-61.300 161.800-98.300 142.400-129.500 114.700-153.200 80.400-168 41.400-173 0-168-41.400-153.200-80.400-129.500-114.700-98.300-142.400-61.300-161.800-20.900-171.700 20.900-171.700 61.300-161.800 98.300-142.400 129.500-114.700 153.200-80.400 168-41.400z"/>
        <path d="M164 0L159.200 39.200 145.200 76.200 122.800 108.800 93.200 135 58.200 153.300 19.800 162.800-19.800 162.800-58.200 153.300-93.200 135-122.800 108.800-145.200 76.200-159.200 39.200-164 0-159.200-39.200-145.200-76.200-122.800-108.800-93.200-135-58.200-153.300-19.800-162.800 19.800-162.800 58.200-153.300 93.200-135 122.800-108.800 145.200-76.200 159.200-39.200zM164 0h9"/>
      </g>
      <g class="binder" transform="translate(1161.500 834.500)">
        <use href="#qy"/><use href="#qy" transform="rotate(90)"/><use href="#qy" transform="rotate(180)"/><use href="#qy" transform="rotate(270)"/>
      </g>
    </svg>

    <aside class="side">
      <ul class="tree">
        <li><svg class="tw"><use href="#right"/></svg><svg><use href="#doc"/></svg><span>MagnetPlateX2_tpu_spacemo...</span></li>
        <li><svg class="tw"><use href="#right"/></svg><svg><use href="#doc"/></svg><span>Unnamed1</span></li>
        <li class="bold"><svg class="tw"><use href="#down"/></svg><svg><use href="#doc"/></svg><span>Magnet plate round mags</span></li>
        <li class="l1 bold"><svg class="tw"><use href="#down"/></svg><div class="sel"><svg><use href="#eye"/></svg><svg><use href="#tbody"/></svg><span>Body</span></div></li>
        <li class="l2"><svg class="tw"><use href="#right"/></svg><svg><use href="#hid"/></svg><svg><use href="#origin"/></svg><span>Origin</span></li>
        <li class="l2"><svg class="tw"><use href="#down"/></svg><svg><use href="#hid"/></svg><svg><use href="#tpad"/></svg><span>Base Pad</span></li>
        <li class="l3"><i class="tw"></i><svg><use href="#hid"/></svg><svg><use href="#tsk"/></svg><span>Sketch</span></li>
        <li class="l2"><svg class="tw"><use href="#right"/></svg><svg><use href="#hid"/></svg><svg><use href="#tpock"/></svg><span>Tpu Slot Pocket</span></li>
        <li class="l2"><i class="tw"></i><svg><use href="#hid"/></svg><svg><use href="#tpat"/></svg><span>Tpu Slot Pattern</span></li>
        <li class="l2"><svg class="tw"><use href="#right"/></svg><svg><use href="#hid"/></svg><svg><use href="#tpad"/></svg><span>Heatset Pad</span></li>
        <li class="l2"><i class="tw"></i><svg><use href="#hid"/></svg><svg><use href="#tpat"/></svg><span>Heatset Pad Pattern</span></li>
        <li class="l2"><svg class="tw"><use href="#right"/></svg><svg><use href="#hid"/></svg><svg><use href="#tpock"/></svg><span>Center Hole Pocket</span></li>
        <li class="l2"><svg class="tw"><use href="#right"/></svg><svg><use href="#hid"/></svg><svg><use href="#tpock"/></svg><span>Tpu Clearance Pocket</span></li>
        <li class="l2"><i class="tw"></i><svg><use href="#hid"/></svg><svg><use href="#tpat"/></svg><span>Tpu clearance Pocke...</span></li>
        <li class="l2"><i class="tw"></i><svg><use href="#eye"/></svg><svg><use href="#binder"/></svg><span>Magnet Plate Binder</span></li>
        <li class="l2"><svg class="tw"><use href="#right"/></svg><svg><use href="#hid"/></svg><svg><use href="#tpock"/></svg><span>Magnet Pockets</span></li>
        <li class="l2"><i class="tw"></i><svg><use href="#hid"/></svg><svg><use href="#tpat"/></svg><span>Magnet Pocket Patt...</span></li>
        <li class="l2"><i class="tw"></i><svg><use href="#hid"/></svg><svg><use href="#tcham"/></svg><span>Chamfer</span></li>
        <li class="l2"><i class="tw"></i><svg><use href="#eye"/></svg><svg><use href="#tfil"/></svg><span>Fillet</span></li>
        <li class="l1"><i class="tw"></i><svg><use href="#eye"/></svg><svg><use href="#sheet"/></svg><span>Spreadsheet</span></li>
        <li class="l1"><i class="tw"></i><svg><use href="#hid"/></svg><svg><use href="#tbox"/></svg><span>magnet plate</span></li>
      </ul>
      <div class="splitter"></div>
      <div class="proptabs"><button class="on">View</button><button>Data</button></div>
    </aside>

    <div class="right">
      <svg class="navcube" viewBox="0 0 140 140" aria-hidden="true">
        <g fill="#66668f" stroke="#2a2a50" stroke-width="1">
          <path d="M68 6L56 19H80zM56 124H80L68 138zM3 72L16 60V84zM133 72L121 60V84z"/>
          <circle cx="125" cy="15" r="6.500"/>
          <path id="rot" d="M49 13L52 20Q37 25 29 33L33 37 18 41 22 26 25 30Q35 17 49 13z"/>
          <use href="#rot" transform="translate(136 0) scale(-1 1)"/>
          <path d="M102 113L113 109 123 113V125L113 129 102 125zM102 113L113 117 123 113M113 117V129"/>
          <path d="M44.500 40.500H91.500L99.500 48.500V95.500L91.500 103.500H44.500L36.500 95.500V48.500z"/>
          <path d="M51.500 48.500H84.500L91.500 55.500V88.500L84.500 95.500H51.500L44.500 88.500V55.500zM51.500 40.500v8M84.500 40.500v8M51.500 95.500v8M84.500 95.500v8M36.500 55.500h8M36.500 88.500h8M91.500 55.500h8M91.500 88.500h8"/>
        </g>
        <path d="M33.500 55v51" stroke="#23a03c" stroke-width="2.500"/><path d="M34 106.500h51" stroke="#a01c38" stroke-width="2"/><path d="M32.500 105.500h2v2h-2z" fill="#22c"/>
        <text x="68" y="77">TOP</text>
      </svg>
      <section class="task">
        <header><svg><use href="#startpart"/></svg><h2>Start Part</h2><button aria-label="Collapse"><svg viewBox="0 0 16 16"><circle cx="8" cy="8" r="7.500" fill="#fff" stroke="#a9b3da"/><path d="M5 7.500l3-3 3 3M5 11.500l3-3 3 3" fill="none" stroke="#1c4fb0" stroke-width="1.600"/></svg></button></header>
        <div class="taskbody"><a href="#"><svg><use href="#body"/></svg>Create body</a></div>
      </section>
      <svg class="axes" viewBox="0 0 70 70" aria-hidden="true">
        <path d="M19.500 56V24" stroke="#288a28" stroke-width="1.500"/><path d="M14 26h11L19.500 12z" fill="#1f8a1f"/>
        <path d="M19 55.500h32" stroke="#8a2028" stroke-width="1.500"/><path d="M48 50v11l14-5.500z" fill="#8a1c20"/>
        <path d="M19.500 49l7 6.500-7 6.500-7-6.500z" fill="#1c1c86"/>
        <text x="21" y="10">Y</text><text x="21" y="54">Z</text><text x="63" y="54">X</text>
      </svg>
    </div>
  </main>

  <div class="doctabs">
    <div class="tab"><svg><use href="#fc"/></svg><span>Start</span><button aria-label="Close"><svg><use href="#x"/></svg></button></div>
    <div class="tab"><svg><use href="#doc"/></svg><span>MagnetPlateX2_tpu_spacemouse : 1*</span><button aria-label="Close"><svg><use href="#x"/></svg></button></div>
    <div class="tab"><svg><use href="#doc"/></svg><span>Unnamed1 : 1*</span><button aria-label="Close"><svg><use href="#x"/></svg></button></div>
    <div class="tab on"><svg><use href="#doc"/></svg><span>Magnet plate round mags : 1*</span><button aria-label="Close"><svg><use href="#x"/></svg></button></div>
    <div class="tab"><svg><use href="#sheet"/></svg><span>Magnet plate round mags*</span><button aria-label="Close"><svg><use href="#x"/></svg></button></div>
  </div>
</div>

<footer class="taskbar">
  <div class="weather">
    <svg viewBox="0 0 28 30"><circle cx="12" cy="17" r="11" fill="#f79a1c"/><path d="M4 25a11 11 0 0 0 16 0" fill="#ef6c12"/><path d="M12 26q-2-6 4-6 2-4 6-1 5 0 4 7z" fill="#b9d0f5"/><circle cx="19" cy="9" r="8" fill="#ff8f98"/><text x="19" y="13">9</text></svg>
    <p><b>72°F</b>Mostly sunny</p>
  </div>
  <div class="apps">
    <button class="start" aria-label="Start"><svg viewBox="0 0 24 24"><path d="M0 0h11.500v11.500H0zM12.500 0H24v11.500H12.500zM0 12.500h11.500V24H0zM12.500 12.500H24V24H12.500z" fill="url(#wn)"/></svg></button>
    <label class="search"><svg class="glass" viewBox="0 0 16 16"><circle cx="7" cy="6.500" r="5.500"/><path d="M11 11l4 4"/></svg><input type="text" placeholder="Search" aria-label="Search"><svg class="pic" viewBox="0 0 36 24"><path d="M3 2h19l1 14H4z" fill="#cfe2f7"/><path d="M6 4h14v10H6z" fill="#8fc2ec"/><path d="M9 6h8v6H9z" fill="#3f7fc6"/><path d="M4 16h18l3 5H0z" fill="#c9cede"/><path d="M27 10h7l-1 12h-5z" fill="#c5342c"/><path d="M28 4l2 7h-2zM32 2l1 9h-2z" fill="#e8b23a"/><path d="M34 5l-1 6" stroke="#4a8"/></svg></label>
    <button aria-label="Task view"><svg viewBox="0 0 24 24"><path d="M6 1h18v16H6z" fill="#f2f2f2"/><path d="M0 7h18v15H0z" fill="#6d6d6d"/><path d="M6 7h12v10H6z" fill="#a8a8a8"/></svg></button>
    <button class="run" aria-label="Firefox"><svg viewBox="0 0 24 24"><path d="M12 1c1 3 4 3 5 6 3-1 6 3 6 7a11 10 0 0 1-22 0c0-4 1-7 3-9l1 2 3-1q1-3 4-5z" fill="url(#ff)"/><circle cx="12" cy="13" r="5" fill="#7b3fe4"/><path d="M6 9q5-2 8 1-3 1-4 3-3-1-4-4z" fill="#ffb52e"/></svg></button>
    <button aria-label="Copilot"><svg viewBox="0 0 24 24"><path d="M8 2h6q3 0 4 4h-2q-3 0-4 4l-3 9q-1 2-3 2-5 0-4-5l3-11q1-3 3-3z" fill="url(#cp)"/><path d="M17 6h1q5 0 4 5l-3 9q-1 2-3 2h-6q-3 0-4-3h2q3 0 4-4l2-7q1-2 3-2z" fill="url(#cq)"/></svg></button>
    <button aria-label="Edge"><svg viewBox="0 0 24 24"><path d="M1 12C2 5 7 1 12.500 1 19 1 23 5 23 10c0 4-3 5-6 5-2 0-4-1-3-3 1-4-3-5-6-4-4 1-7 4-7 4z" fill="url(#eg)"/><path d="M1 12c1-4 5-6 8-5-3 3-2 10 3 12 4 1 7 0 9-1-2 3-5 5-9 5C5 23 1 18 1 12z" fill="#1b6fd0"/></svg></button>
    <button aria-label="File Explorer"><svg viewBox="0 0 24 24"><path d="M0 2h9l2 3h13v17H0z" fill="#e9a90f"/><path d="M0 7h24v15H0z" fill="#ffd24a"/><path d="M4 22v-4q0-2 2-2h12q2 0 2 2v4z" fill="#1a78cc"/></svg></button>
    <button aria-label="Store"><svg viewBox="0 0 24 24"><path d="M7 7V3q0-1 1-1h8q1 0 1 1v4" fill="none" stroke="#3ab0f0" stroke-width="2"/><rect x="1" y="6" width="22" height="17" rx="3" fill="#f4f4f4"/><path d="M7 10h4.500v4.500H7z" fill="#f25022"/><path d="M12.500 10H17v4.500h-4.500z" fill="#7fba00"/><path d="M7 15.500h4.500V20H7z" fill="#00a4ef"/><path d="M12.500 15.500H17V20h-4.500z" fill="#ffb900"/></svg></button>
    <button aria-label="Outlook"><svg viewBox="0 0 24 24"><path d="M4 7l9-6 10 6v15H5z" fill="#1a6fc4"/><path d="M7 12h17v11H8z" fill="#38a8ea"/><path d="M24 11v12l-10-5z" fill="#7ad0f8"/><rect x="0" y="6" width="15" height="14" rx="2" fill="#0f5cb0"/><circle cx="7.500" cy="13" r="3.500" fill="none" stroke="#fff" stroke-width="2"/></svg></button>
    <button aria-label="Calculator"><svg viewBox="0 0 24 24"><rect x="3" y="0" width="18" height="24" rx="1" fill="#6e7680"/><path d="M5 2h14v4H5z" fill="#4cc2f0"/><path d="M5 8h4v4H5zM10 8h4v4h-4zM15 8h4v4h-4zM5 13h4v4H5zM10 13h4v4h-4zM5 18h4v4H5zM10 18h4v4h-4z" fill="#c9ced4"/><path d="M15 13h4v9h-4z" fill="#1a4f8f"/></svg></button>
    <button class="run" aria-label="Remote"><svg viewBox="0 0 24 24"><rect width="24" height="24" rx="5" fill="#0a53e8"/><path d="M7 5.500h7q3 0 3 3.500t-3 3.500H9M11 12.500l5 6M8 11v8" fill="none" stroke="#fff" stroke-width="2.400"/></svg></button>
    <button class="run" aria-label="Arduino"><svg viewBox="0 0 24 24"><rect x="1" y="1" width="22" height="22" rx="4" fill="#1b9a9e"/><circle cx="8" cy="12" r="3.500" fill="none" stroke="#fff" stroke-width="1.500"/><circle cx="16" cy="12" r="3.500" fill="none" stroke="#fff" stroke-width="1.500"/></svg></button>
    <button class="run" aria-label="Visual Studio Code"><svg viewBox="0 0 24 24"><path d="M17 0l7 3v18l-7 3L3 10l-2 2-1-2 3-3 14 11V6L3 17l-3-2z" fill="#1e8fdc"/><path d="M17 0l7 3v18l-7 3z" fill="#37aef2"/></svg></button>
    <button class="run active" aria-label="FreeCAD"><svg><use href="#fc"/></svg></button>
    <button class="run" aria-label="SpaceMouse"><svg viewBox="0 0 24 24"><path d="M8 1h8l4 6-3 6-9 2-4-7z" fill="#101318"/><circle cx="12" cy="7.500" r="5.500" fill="#454a52"/><path d="M18 8q3 4 0 10-4 6-12 4l-1-6q8 0 9-4 3-1 4-4z" fill="#1e86f0"/><path d="M5 16q4 3 8 0l-3 6H7z" fill="#5cb4ff"/></svg></button>
  </div>
  <div class="tray">
    <svg viewBox="0 0 12 12" class="up"><path d="M1 9l5-5 5 5"/></svg>
    <svg viewBox="0 0 18 18"><path d="M11 1.500H1.500v12H15V9M8 14v3M4 16.500h9M13 .500h4v5h-4zM15 6v4"/></svg>
    <svg viewBox="0 0 18 18"><path d="M1.500 7v4h3l4 4V3l-4 4z"/><path d="M11 6.500q2 2.500 0 5"/><path class="off" d="M13 4.500q3.500 4.500 0 9M15 3q4.500 6 0 12"/></svg>
    <p>7:02 PM<br>9/25/2025</p>
  </div>
</footer>
</body>
</html>
```
FILE: styles.css
```css
* { box-sizing: border-box; margin: 0; padding: 0; }
html, body { height: 100%; }
body {
  display: flex;
  flex-direction: column;
  overflow: hidden;
  background: #1c1c1e;
  font-family: Roboto, "Open Sans", sans-serif;
  font-size: 12px;
  color: #000;
}
button, input, select { font: inherit; color: inherit; background: none; border: 0; }
svg { display: block; flex: none; }
.defs { position: absolute; width: 0; height: 0; }
.window { flex: 1; min-height: 0; display: flex; flex-direction: column; background: #efefef; border-radius: 0 0 8px 8px; overflow: hidden; }

.titlebar { display: flex; height: 23px; padding: 0 9px 0 8px; gap: 6px; background: linear-gradient(90deg, #1b202c, #211e26 20%, #1c1f28 60%, #1a202c); color: #fff; }
.titlebar .app { width: 16px; height: 16px; }
.titlebar h1 { flex: 1; font-size: 12px; font-weight: 400; line-height: 16px; }
.winbtns { display: flex; height: 15px; }
.winbtns button { width: 46px; display: flex; justify-content: center; align-items: center; }
.winbtns button:last-child { width: 28px; margin-left: 8px; }
.winbtns svg { width: 10px; height: 10px; fill: none; stroke: #fff; overflow: visible; }

.menubar { display: flex; height: 21px; background: #fff; border-bottom: 1px solid #ededed; }
.menubar button { padding: 2px 8px 0; line-height: 18px; }

.toolrow { display: flex; height: 34px; border-bottom: 1px solid #b4b4b4; border-top: 1px solid #fafafa; }
.toolbar { display: flex; align-items: center; padding: 0 1px 0 10px; border-right: 1px solid #b4b4b4; position: relative; }
.toolbar::before { content: ""; position: absolute; left: 4px; top: 4px; bottom: 4px; width: 2px; background: repeating-linear-gradient(#b0b0b0 0 2px, transparent 2px 5px); }
.toolbar:last-child { border-right: 0; }
.toolbar button { width: 31px; height: 32px; display: flex; align-items: center; justify-content: center; }
.toolbar button svg { width: 24px; height: 24px; }
.toolbar .drop { width: 43px; justify-content: flex-start; padding-left: 3px; gap: 6px; color: #222; }
.toolbar .drop .arr { width: 8px; height: 8px; }
.toolbar .dim { color: #777; }
.sep { width: 6px; height: 24px; border-left: 1px solid #c8c8c8; }
.combo { display: flex; align-items: center; width: 151px; height: 22px; padding: 0 4px 0 6px; background: #fdfdfd; border: 1px solid #c8c8c8; border-radius: 2px; }
.combo svg { width: 14px; height: 14px; }
.combo select { flex: 1; appearance: none; padding-left: 3px; font-size: 11px; }
.combo .chev { width: 10px; height: 10px; fill: none; stroke: #555; }

.viewport { position: relative; flex: 1; min-height: 0; display: flex; justify-content: space-between; background: linear-gradient(#333366, #9898aa); overflow: hidden; }
.scene { position: absolute; inset: 0; width: 100%; height: 100%; fill: none; }
.edges { stroke: #141418; stroke-width: 1.2; }
.binder { stroke: #f8d010; stroke-width: 1.3; }

.side { position: relative; width: 255px; display: flex; flex-direction: column; }
.tree { list-style: none; padding-top: 16px; font-family: "Noto Sans", "Open Sans", sans-serif; font-size: 14px; color: #f0f0ee; text-shadow: 0 0 1px #222, 0 0 2px #222, 1px 1px 1px #222; }
.tree li { display: flex; align-items: center; height: 24px; white-space: nowrap; }
.tree svg { width: 18px; height: 18px; margin: 0 2px; }
.tree .tw { width: 10px; height: 10px; margin: 0 5px; flex: none; }
.tree span { padding-left: 3px; }
.tree .l1 { padding-left: 20px; }
.tree .l2 { padding-left: 40px; }
.tree .l3 { padding-left: 60px; }
.tree .bold { font-weight: 700; color: #fff; }
.sel { display: flex; align-items: center; width: 105px; height: 24px; background: #3d91ff; outline: 1px solid #1c1c3a; text-shadow: none; }
.splitter { height: 8px; margin-top: 71px; background: #efefef; border: solid #222; border-width: 1px 0; }
.proptabs { margin-top: auto; display: flex; align-items: flex-end; font-size: 11px; }
.proptabs button { height: 21px; padding: 0 9px; border: 1px solid #222; background: #f3f3f3; margin-bottom: 2px; }
.proptabs .on { height: 23px; margin-bottom: 0; padding: 0 12px; background: #fafafa; border-color: #222 #ddd #ddd #fafafa; }

.right { position: relative; width: 418px; display: flex; flex-direction: column; align-items: flex-end; }
.navcube { width: 140px; height: 140px; }
.navcube text { font: 14px "Open Sans", sans-serif; fill: #3c3c60; text-anchor: middle; }
.task { align-self: stretch; margin: 26px 8px 0 0; border: 1px solid #fff; border-radius: 4px; overflow: hidden; color: #215dc6; background: #d6dff7; font-family: "Open Sans", sans-serif; font-size: 11px; }
.task header { display: flex; align-items: center; height: 24px; padding: 0 4px 0 5px; gap: 3px; background: linear-gradient(90deg, #fff, #c6d3f7); border-bottom: 1px solid #fff; }
.task header svg { width: 15px; height: 15px; }
.task h2 { flex: 1; font-size: 11px; }
.task header button svg { width: 16px; height: 16px; }
.taskbody { padding: 12px 9px; height: 39px; }
.taskbody a { display: flex; align-items: center; gap: 3px; color: inherit; text-decoration: none; line-height: 15px; }
.taskbody svg { width: 13px; height: 13px; }
.axes { width: 70px; height: 70px; margin: auto 12px 47px 0; overflow: visible; }
.axes text { font: 700 10px "Liberation Sans", sans-serif; }

.doctabs { display: flex; height: 24px; background: #efefef; border-top: 1px solid #c8c8cc; font-size: 11px; }
.tab { display: flex; align-items: center; height: 22px; padding: 0 13px 0 11px; gap: 4px; background: #f3f3f3; border-right: 1px solid #e0e0e0; border-bottom: 1px solid #e0e0e0; }
.tab > svg { width: 16px; height: 16px; }
.tab.on { height: 23px; padding-top: 2px; background: #fafafa; border-bottom: 0; }
.tab button { width: 14px; height: 14px; border-radius: 2px; background: #b4b4b4; border: 1px solid #909090; }
.tab button svg { width: 12px; height: 12px; }
.tab.on button { background: #dd6a50; border-color: #b03a20; }

.taskbar { display: grid; grid-template-columns: 1fr auto 1fr; align-items: center; height: 48px; padding-bottom: 2px; background: linear-gradient(90deg, #211f23, #202023 15%, #222021 28%, #2e1e21 36%, #231f21 55%, #221f20); border-top: 1px solid #3c3c3e; color: #fff; }
.weather { display: flex; gap: 3px; padding-left: 20px; }
.weather svg { width: 28px; height: 30px; }
.weather text { font: 12px "Open Sans", sans-serif; text-anchor: middle; fill: #222; }
.weather p, .tray p { line-height: 16px; }
.weather p { color: #b8b8b8; }
.weather b { display: block; font-weight: 400; color: #fff; }
.apps { display: flex; align-items: center; height: 45px; }
.apps button { position: relative; width: 40px; height: 40px; margin: 0 2px; display: flex; align-items: center; justify-content: center; border-radius: 4px; }
.apps button svg { width: 24px; height: 24px; }
.run::after { content: ""; position: absolute; bottom: 1px; left: 17px; width: 6px; height: 3px; border-radius: 2px; background: #8e8e8e; }
.apps .active { background: #322f31; box-shadow: inset 0 0 0 1px #3c393b; }
.active.run::after { left: 12px; width: 16px; background: #dfa3e0; }
.search { display: flex; align-items: center; gap: 10px; width: 219px; height: 32px; margin: 0 3px; padding: 0 10px 0 12px; border-radius: 16px; background: #443d3f; border: 1px solid #5a5355; }
.search .glass { width: 15px; height: 15px; fill: none; stroke: #ddd; stroke-width: 1.500; }
.search input { flex: 1; min-width: 0; font-size: 14px; outline: 0; }
.search input::placeholder { color: #d0cccd; opacity: 1; }
.search .pic { width: 36px; height: 24px; }
.tray { display: flex; align-items: center; justify-content: flex-end; padding-right: 19px; }
.tray svg { width: 18px; height: 18px; margin-right: 6px; fill: none; stroke: #fff; }
.tray .up { width: 12px; height: 12px; margin-right: 18px; stroke-width: 1.500; }
.tray .off { stroke: #777; }
.tray p { width: 66px; text-align: right; }
```
